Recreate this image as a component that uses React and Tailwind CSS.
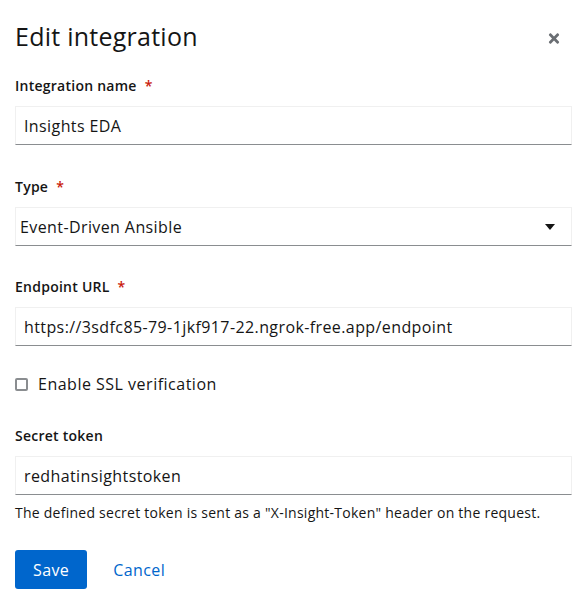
import React from 'react'

const Required = () => (
  <span className="ml-[8px] text-[#c9190b]" aria-hidden="true">*</span>
)

const Field = ({ label, required, children, className = '' }) => (
  <div className={className}>
    <label className="block text-[14px] leading-[21px] font-semibold tracking-[0.25px] text-[#151515] mb-[10px]">
      {label}
      {required && <Required />}
    </label>
    {children}
  </div>
)

const TextInput = ({ value }) => (
  <div className="h-[39px] flex items-center bg-white border border-[#f0f0f0] border-b-[#8a8d90] px-[8px] text-[16px] tracking-[0.4px] text-[#151515]">
    {value}
  </div>
)

const Select = ({ value }) => (
  <div className="h-[39px] flex items-center justify-between bg-white border border-[#f0f0f0] border-b-[#8a8d90] pl-[4px] pr-[16px] text-[16px] tracking-[0.4px] text-[#151515]">
    <span>{value}</span>
    <svg width="10" height="6" viewBox="0 0 10 6">
      <path d="M0 0h10L5 6z" fill="#151515" />
    </svg>
  </div>
)

const CloseIcon = () => (
  <svg width="12" height="15" viewBox="0 0 352 512" fill="#6a6e73">
    <path d="M242.72 256l100.07-100.07c12.28-12.28 12.28-32.19 0-44.48l-22.24-22.24c-12.28-12.28-32.19-12.28-44.48 0L176 189.28 75.93 89.21c-12.28-12.28-32.19-12.28-44.48 0L9.21 111.45c-12.28 12.28-12.28 32.19 0 44.48L109.28 256 9.21 356.07c-12.28 12.28-12.28 32.19 0 44.48l22.24 22.24c12.28 12.28 32.2 12.28 44.48 0L176 322.72l100.07 100.07c12.28 12.28 32.2 12.28 44.48 0l22.24-22.24c12.28-12.28 12.28-32.19 0-44.48L242.72 256z" />
  </svg>
)

export default function App() {
  return (
    <div
      className="w-[577px] h-[600px] bg-white pl-[15px] pr-[5px] pt-[21px] text-[#151515]"
      style={{ fontFamily: '"Open Sans", "Liberation Sans", Arial, sans-serif' }}
    >
      <div className="flex items-center justify-between h-[30px]">
        <h1 className="text-[25px] leading-[30px] tracking-[0.25px] text-[#151515]">Edit integration</h1>
        <button className="mt-[4px] mr-[11px] flex items-center justify-center w-[14px] h-[15px]">
          <CloseIcon />
        </button>
      </div>

      <Field label="Integration name" required className="mt-[24px]">
        <TextInput value="Insights EDA" />
      </Field>

      <Field label="Type" required className="mt-[31px]">
        <Select value="Event-Driven Ansible" />
      </Field>

      <Field label="Endpoint URL" required className="mt-[30px]">
        <TextInput value="https://3sdfc85-79-1jkf917-22.ngrok-free.app/endpoint" />
      </Field>

      <div className="mt-[26px] flex items-center h-[24px] gap-[10px]">
        <span className="w-[13px] h-[13px] border-2 border-[#8a8d90] rounded-[2px] bg-white" />
        <span className="text-[16px] leading-[24px] tracking-[0.5px]">Enable SSL verification</span>
      </div>

      <Field label="Secret token" className="mt-[29px]">
        <TextInput value="redhatinsightstoken" />
      </Field>
      <p className="mt-[7px] text-[14px] leading-[21px] tracking-[0.25px] text-[#151515]">
        The defined secret token is sent as a "X-Insight-Token" header on the request.
      </p>

      <div className="mt-[27px] flex items-center gap-[10px]">
        <button className="h-[39px] px-[18px] rounded-[3px] bg-[#0066cc] text-white text-[16px] tracking-[0.4px]">
          Save
        </button>
        <button className="h-[39px] px-[16px] text-[#0066cc] text-[16px] tracking-[0.4px]">
          Cancel
        </button>
      </div>
    </div>
  )
}
